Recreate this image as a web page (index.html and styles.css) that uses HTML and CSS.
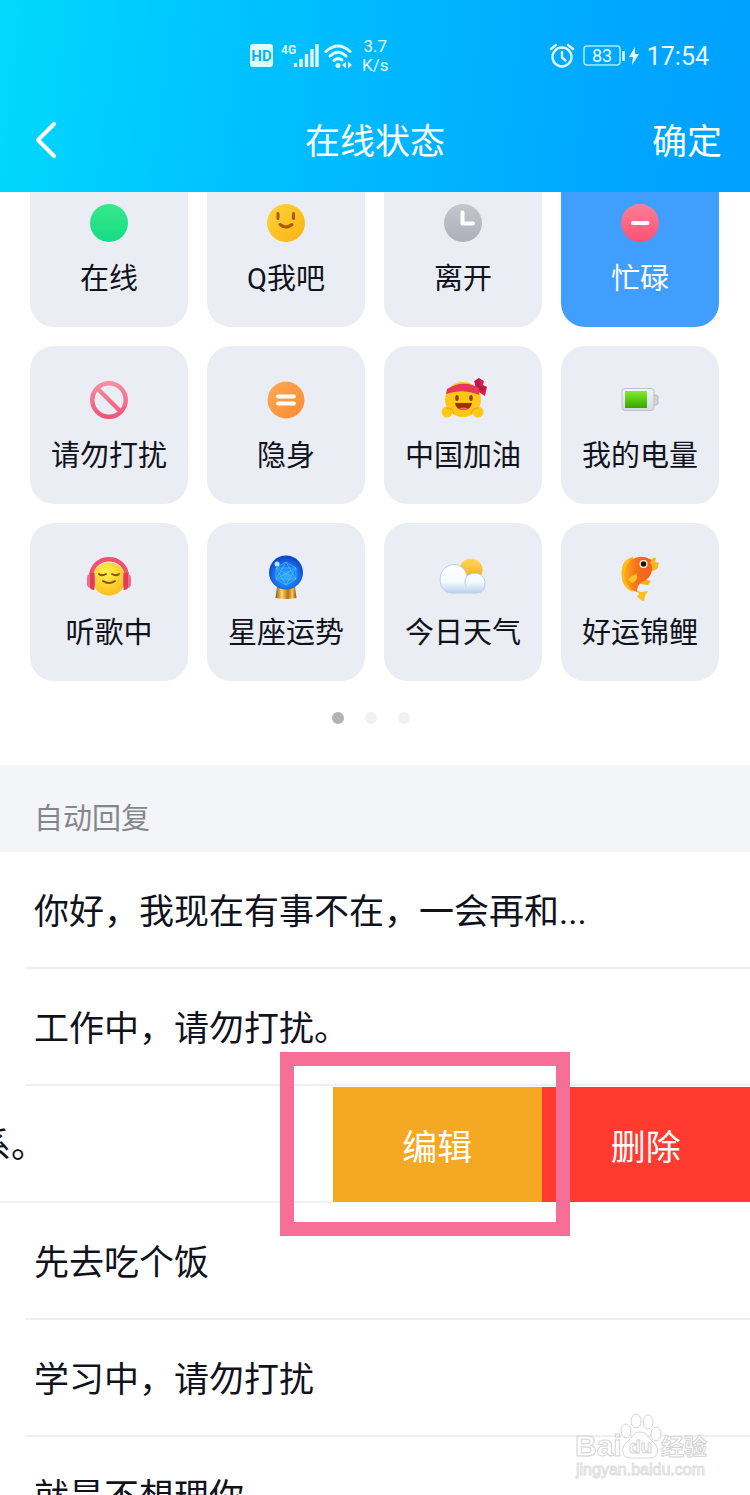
FILE: index.html
```html
<!DOCTYPE html>
<html lang="zh-CN">
<head>
  <meta charset="UTF-8">
  <title>在线状态</title>
  <meta name="viewport" content="width=device-width, initial-scale=1.0">
  <link rel="stylesheet" href="styles.css">
</head>
<body>
  <header class="header">
    <div class="statusbar">
      <div class="statusbar-left">
        <svg class="hd" width="24" height="24" viewBox="0 0 24 24">
          <rect x="0" y="0" width="23" height="23" rx="3" fill="#dffaff"/>
          <text x="11.5" y="17" text-anchor="middle" font-family="Roboto, sans-serif" font-weight="700" font-size="15" fill="#06b4f2">HD</text>
        </svg>
        <svg class="signal" width="38" height="26" viewBox="0 0 38 26">
          <text x="0" y="11" font-family="Roboto, sans-serif" font-weight="700" font-size="12" fill="#dffaff">4G</text>
          <path d="M14.500 24v-4M20 24v-8M25.500 24V11M31 24V6M36 24V1" stroke="#dffaff" stroke-width="3.400"/>
        </svg>
        <svg class="wifi" width="30" height="26" viewBox="0 0 30 26">
          <g fill="none" stroke="#dffaff" stroke-width="3" stroke-linecap="round">
            <path d="M2 8.500Q14 -2.500 26 8.500"/>
            <path d="M6 13Q14 5.500 22 13"/>
            <path d="M10 17.500Q14 14 18 17"/>
          </g>
          <circle cx="14" cy="22.500" r="2.500" fill="#dffaff"/>
          <path d="M22 18.500v7l-4-3.500zM24 18.500v7l4-3.500z" fill="#dffaff"/>
        </svg>
        <div class="speed">3.7<br>K/s</div>
      </div>
      <div class="statusbar-right">
        <svg width="26" height="26" viewBox="0 0 26 26" fill="none" stroke="#dffaff" stroke-width="2.400" stroke-linecap="round">
          <circle cx="13" cy="14" r="9.500"/>
          <path d="M13 9v5.500l3.500 3M2 6l5-4M24 6l-5-4"/>
        </svg>
        <svg width="42" height="24" viewBox="0 0 42 24">
          <rect x="1" y="2" width="36" height="19" rx="3" fill="none" stroke="#a6ebff" stroke-width="1.600"/>
          <path d="M40.500 7v10" stroke="#dffaff" stroke-width="2.600"/>
          <text x="19" y="18" text-anchor="middle" font-family="Roboto, sans-serif" font-size="18" fill="#e8fcff">83</text>
        </svg>
        <svg class="bolt" width="10" height="18" viewBox="0 0 10 18">
          <path d="M6 0L0 10h4l-1 8 7-11H6z" fill="#e8fcff"/>
        </svg>
        <span class="time">17:54</span>
      </div>
    </div>
    <nav class="nav">
      <button class="back" aria-label="返回">
        <svg width="22" height="38" viewBox="0 0 22 38" fill="none" stroke="#fff" stroke-width="4" stroke-linecap="round" stroke-linejoin="round">
          <path d="M19 3L3 19l16 16"/>
        </svg>
      </button>
      <h1>在线状态</h1>
      <button class="confirm">确定</button>
    </nav>
  </header>

  <main>
    <section class="status">
      <div class="status-grid">
        <button class="cell">
          <svg class="icon" viewBox="0 0 48 48">
            <defs><linearGradient id="green" x1="0" y1="0" x2="0" y2="1"><stop offset="0" stop-color="#37e88c"/><stop offset="1" stop-color="#16dc82"/></linearGradient></defs>
            <circle cx="24" cy="24" r="19" fill="url(#green)"/>
          </svg>
          <span>在线</span>
        </button>
        <button class="cell">
          <svg class="icon" viewBox="0 0 48 48">
            <defs><linearGradient id="yellow" x1="0" y1="0" x2="1" y2="1"><stop offset="0" stop-color="#fdd33c"/><stop offset="1" stop-color="#fbb210"/></linearGradient></defs>
            <circle cx="24" cy="24" r="19" fill="url(#yellow)"/>
            <path d="M16 14.500v5M31.500 14.500v5M18 25.500q6 5 12 0" fill="none" stroke="#a85a08" stroke-width="3" stroke-linecap="round"/>
          </svg>
          <span>Q我吧</span>
        </button>
        <button class="cell">
          <svg class="icon" viewBox="0 0 48 48">
            <defs><linearGradient id="grey" x1="0" y1="0" x2="0" y2="1"><stop offset="0" stop-color="#c6c6ce"/><stop offset="1" stop-color="#aeaeb8"/></linearGradient></defs>
            <circle cx="24" cy="24" r="19" fill="url(#grey)"/>
            <path d="M23.500 13.500v11H34" fill="none" stroke="#fff" stroke-width="4" stroke-linecap="round" stroke-linejoin="round"/>
          </svg>
          <span>离开</span>
        </button>
        <button class="cell active" aria-pressed="true">
          <svg class="icon" viewBox="0 0 48 48">
            <defs><linearGradient id="red" x1="0" y1="0" x2="0" y2="1"><stop offset="0" stop-color="#fb7f97"/><stop offset="1" stop-color="#fb5273"/></linearGradient></defs>
            <circle cx="24" cy="24" r="19" fill="url(#red)"/>
            <path d="M17 24h14.500" stroke="#fff" stroke-width="4" stroke-linecap="round"/>
          </svg>
          <span>忙碌</span>
        </button>

        <button class="cell">
          <svg class="icon" viewBox="0 0 48 48">
            <defs><linearGradient id="pink" gradientUnits="userSpaceOnUse" x1="0" y1="5" x2="0" y2="43"><stop offset="0" stop-color="#f592a6"/><stop offset="1" stop-color="#ee5476"/></linearGradient></defs>
            <g fill="none" stroke="url(#pink)" stroke-width="4.500">
              <circle cx="24" cy="24" r="16.700"/>
              <path d="M12.500 12.500l23 23"/>
            </g>
          </svg>
          <span>请勿打扰</span>
        </button>
        <button class="cell">
          <svg class="icon" viewBox="0 0 48 48">
            <defs><linearGradient id="orange" x1="0" y1="0" x2="1" y2="1"><stop offset="0" stop-color="#fcaa55"/><stop offset="1" stop-color="#fb8b30"/></linearGradient></defs>
            <circle cx="24" cy="24" r="18.500" fill="url(#orange)"/>
            <path d="M16 20.500h16M16 27.500h16" stroke="#fff" stroke-width="3.800" stroke-linecap="round"/>
          </svg>
          <span>隐身</span>
        </button>
        <button class="cell">
          <svg class="icon" viewBox="0 0 48 48">
            <path d="M36 10l4-8 5 3-1 4 4 2-2 9-8-5z" fill="#d82148"/>
            <path d="M37 11l-2-6 5-3 1 8 6 1-3 5z" fill="#b81a4a"/>
            <ellipse cx="24" cy="23.500" rx="18" ry="17.500" fill="#ffc815"/>
            <path d="M8 13Q24 3 40 12V19Q24 12 7 18z" fill="#e8375a"/>
            <circle cx="8" cy="36" r="5.500" fill="#ffc71c"/>
            <circle cx="39" cy="36" r="5.500" fill="#ffc71c"/>
            <path d="M8 32q6 0 7 6M39 32q-6 0-7 6" fill="none" stroke="#f3a90c" stroke-width="1.300"/>
            <ellipse cx="18" cy="22" rx="1.800" ry="3" fill="#934006"/>
            <ellipse cx="32" cy="22" rx="1.800" ry="3" fill="#934006"/>
            <path d="M16 27h17q-1 7-8.500 7T16 27z" fill="#a52810"/>
            <path d="M20 32.500q4.500-2 9 0-4.500 3-9 0z" fill="#f0635a"/>
          </svg>
          <span>中国加油</span>
        </button>
        <button class="cell">
          <svg class="icon" viewBox="0 0 48 48">
            <defs>
              <linearGradient id="case" x1="0" y1="0" x2="0" y2="1"><stop offset="0" stop-color="#f3f5f8"/><stop offset="1" stop-color="#d6d9de"/></linearGradient>
              <linearGradient id="charge" x1="0" y1="0" x2="0" y2="1"><stop offset="0" stop-color="#85e735"/><stop offset=".5" stop-color="#5acb12"/><stop offset="1" stop-color="#37a306"/></linearGradient>
            </defs>
            <rect x="37" y="19" width="5" height="10" rx="2" fill="#d2d4da" stroke="#b9bcc3"/>
            <rect x="6" y="12.500" width="32" height="22" rx="3" fill="url(#case)" stroke="#bcbfc6"/>
            <rect x="9" y="15" width="22" height="17" fill="url(#charge)"/>
          </svg>
          <span>我的电量</span>
        </button>

        <button class="cell">
          <svg class="icon" viewBox="0 0 48 48">
            <defs><radialGradient id="face" cx=".4" cy=".3" r=".8"><stop offset="0" stop-color="#fff04e"/><stop offset="1" stop-color="#fcb813"/></radialGradient></defs>
            <path d="M6 25C6 0 42 0 42 25" fill="none" stroke="#ef5370" stroke-width="4.500"/>
            <circle cx="24" cy="26" r="16.500" fill="url(#face)"/>
            <rect x="2" y="21" width="8" height="14" rx="4" fill="#f16e88"/>
            <rect x="38" y="21" width="8" height="14" rx="4" fill="#f16e88"/>
            <path d="M5 20h4.500v17Q5 37 5 34zM43 20h-4.500v17q4.500 0 4.500-3z" fill="#e23c5c"/>
            <path d="M14 21q3 2.500 7 0M27 21q4 2.500 7 0M18 28q6 4 12 0" fill="none" stroke="#8b5206" stroke-width="2" stroke-linecap="round"/>
          </svg>
          <span>听歌中</span>
        </button>
        <button class="cell">
          <svg class="icon" viewBox="0 0 48 48">
            <defs>
              <radialGradient id="ball" cx=".5" cy=".6" r=".55"><stop offset="0" stop-color="#2db6fa"/><stop offset=".6" stop-color="#1878ef"/><stop offset="1" stop-color="#0d47cd"/></radialGradient>
              <linearGradient id="gold"><stop offset="0" stop-color="#92540c"/><stop offset=".3" stop-color="#ffd86c"/><stop offset=".6" stop-color="#b96c10"/><stop offset=".8" stop-color="#f9c853"/><stop offset="1" stop-color="#8a4b08"/></linearGradient>
            </defs>
            <path d="M15 34h18l1.500 11q-10.500 2-21 0z" fill="url(#gold)"/>
            <circle cx="24" cy="19.500" r="17" fill="url(#ball)"/>
            <path d="M24 9l10 6v11l-10 6-10-6V15zM14 15l20 11M34 15L14 26M24 9l10 17H14zM24 32L14 15h20z" fill="none" stroke="#5dc7fb" stroke-width=".8" opacity=".7"/>
            <circle cx="15" cy="11" r="2.500" fill="#b9e5ff"/>
          </svg>
          <span>星座运势</span>
        </button>
        <button class="cell">
          <svg class="icon" viewBox="0 0 48 48">
            <defs>
              <linearGradient id="cloud" x1="0" y1="0" x2="0" y2="1"><stop offset="0" stop-color="#fff"/><stop offset=".6" stop-color="#f5faff"/><stop offset="1" stop-color="#b9d1ec"/></linearGradient>
              <linearGradient id="sun" x1="0" y1="0" x2="0" y2="1"><stop offset="0" stop-color="#ffd957"/><stop offset="1" stop-color="#f9a51c"/></linearGradient>
            </defs>
            <circle cx="32" cy="17" r="11.500" fill="url(#sun)"/>
            <path d="M13 40C-2 39-1 20 6 15c8-7 20-3 22 8 9-6 18-1 18 7s-4 10-10 10z" fill="url(#cloud)" stroke="#b7cfe9"/>
            <path d="M28 23q-3 4-1 11" fill="none" stroke="#c9dcf0" stroke-width="1.500"/>
          </svg>
          <span>今日天气</span>
        </button>
        <button class="cell">
          <svg class="icon" viewBox="0 0 48 48">
            <defs><linearGradient id="carp"><stop offset="0" stop-color="#fbaa18"/><stop offset=".35" stop-color="#f5731b"/><stop offset="1" stop-color="#f15a1e"/></linearGradient></defs>
            <path d="M17 4Q5 6 5.500 22q0 12 11 17z" fill="#fdbb17"/>
            <path d="M27 26l8 2-3 4-8-1z" fill="#fcae19"/>
            <path d="M36 7Q22-1 12 10 4 23 13 34q3 4 8 5 0-7 5-10 8-3 10-11l6-4z" fill="url(#carp)"/>
            <path d="M34 10q2-6 6-5l-1 4 4 1-2 6-6 3q3-5-1-9z" fill="#fbb61d"/>
            <path d="M20 37l3 4-2 3 7 5 1-6 3-5-7 1z" fill="#fbc01a"/>
            <path d="M12 27q3-5 9-6 1 8-5 9z" fill="#ffc21f"/>
            <circle cx="27.500" cy="11" r="4" fill="#fff"/>
            <circle cx="27.500" cy="11" r="2.800" fill="#23140c"/>
          </svg>
          <span>好运锦鲤</span>
        </button>
      </div>
      <div class="dots">
        <i class="dot current"></i>
        <i class="dot"></i>
        <i class="dot"></i>
      </div>
    </section>

    <h2 class="section-title">自动回复</h2>

    <ul class="replies">
      <li><p>你好，我现在有事不在，一会再和...</p></li>
      <li><p>工作中，请勿打扰。</p></li>
      <li class="swiped">
        <p>我去吃饭了，一会再联系。</p>
        <div class="actions">
          <button class="edit">编辑</button>
          <button class="delete">删除</button>
          <span class="marker"></span>
        </div>
      </li>
      <li><p>先去吃个饭</p></li>
      <li><p>学习中，请勿打扰</p></li>
      <li><p>就是不想理你</p></li>
    </ul>
  </main>

  <svg class="watermark" width="140" height="70" viewBox="0 0 140 70" fill="#fff" stroke="#d4d4d4" stroke-width="1">
    <g font-family="'Liberation Sans', 'Noto Sans CJK SC', sans-serif" font-weight="700">
      <text x="5" y="44" font-size="30">Bai</text>
      <ellipse cx="56" cy="19" rx="5" ry="7"/>
      <ellipse cx="66" cy="9" rx="5" ry="7"/>
      <ellipse cx="78" cy="10" rx="5" ry="7"/>
      <ellipse cx="86" cy="22" rx="5" ry="7"/>
      <path d="M70 20c7 0 8 6 13 10 8 7 5 16-3 16-5 0-15 0-19 0-9 0-11-10-4-16 5-4 6-10 13-10z"/>
      <text x="59" y="41" font-size="19">du</text>
      <text x="91" y="43" font-size="23">经验</text>
    </g>
    <text class="watermark-url" x="6" y="63" font-family="'Liberation Sans', sans-serif" font-size="16">jingyan.baidu.com</text>
  </svg>
</body>
</html>
```
FILE: styles.css
```css
:root {
  --text: #10121c;
  --cell: #ebedf4;
  --line: #f0f0f2;
}

* {
  box-sizing: border-box;
}

body {
  position: relative;
  margin: 0;
  height: 100vh;
  overflow: hidden;
  background: #fff;
  color: var(--text);
  font-family: Roboto, "Noto Sans CJK SC", sans-serif;
}

button {
  border: none;
  padding: 0;
  background: none;
  color: inherit;
  font-family: inherit;
  cursor: pointer;
}

svg {
  display: block;
  flex: none;
}

/* header */
.header {
  position: relative;
  z-index: 1;
  padding-bottom: 24px;
  background: linear-gradient(97deg, #00d9fc, #00c3ff 30%, #00a5ff 85%, #00a1ff);
  color: #fff;
}

.statusbar {
  display: flex;
  align-items: center;
  justify-content: space-between;
  height: 112px;
  padding: 0 41px 0 250px;
  color: #e8fcff;
}

.statusbar-left,
.statusbar-right {
  display: flex;
  align-items: center;
}

.signal {
  margin-left: 7px;
}

.wifi {
  margin-left: 5px;
}

.speed {
  margin-left: 8px;
  font-size: 17px;
  line-height: 19px;
  text-align: center;
}

.statusbar-right {
  gap: 8px;
}

.bolt {
  margin-left: -4px;
}

.time {
  font-size: 25px;
}

.nav {
  display: grid;
  grid-template-columns: 1fr auto 1fr;
  align-items: center;
  height: 56px;
  padding: 0 28px;
}

.back {
  justify-self: start;
  padding-left: 7px;
}

.nav h1,
.confirm {
  margin: 0;
  padding-top: 6px;
  font-size: 35px;
  font-weight: 400;
  line-height: 50px;
}

.confirm {
  justify-self: end;
}

/* status grid, scrolled a little under the header */
.status {
  margin-top: -23px;
  padding: 0 31px 0 30px;
}

.status-grid {
  display: grid;
  grid-template-columns: repeat(4, 1fr);
  gap: 19px;
}

.cell {
  display: flex;
  flex-direction: column;
  align-items: center;
  gap: 12px;
  aspect-ratio: 1;
  padding-top: 30px;
  border-radius: 24px;
  background: var(--cell);
  font-size: 29px;
  line-height: 40px;
  white-space: nowrap;
}

.cell.active {
  background: #409eff;
  color: #fff;
}

.icon {
  width: 48px;
  height: 48px;
}

.dots {
  display: flex;
  justify-content: center;
  gap: 21px;
  padding: 31px 8px 41px 0;
}

.dot {
  width: 12px;
  height: 12px;
  border-radius: 50%;
  background: #f1f1f1;
}

.dot.current {
  background: #b4b4b4;
}

/* auto replies */
.section-title {
  margin: 0;
  padding: 34px 34px 12px;
  background: #f4f5f8;
  color: #85868c;
  font-size: 29px;
  font-weight: 400;
  line-height: 41px;
}

.replies {
  margin: 0;
  padding: 0;
  list-style: none;
}

.replies li {
  display: flex;
  padding-left: 25px;
}

.replies p {
  flex: 1;
  margin: 0;
  padding: 35px 9px 29px;
  border-bottom: 2px solid var(--line);
  font-size: 35px;
  line-height: 51px;
  white-space: nowrap;
}

.replies .swiped {
  --actions: 417px;
  width: calc(100% + var(--actions));
  margin-left: calc(-1 * var(--actions));
}

.replies .swiped p {
  padding-left: 18px;
}

.actions {
  position: relative;
  display: flex;
  width: var(--actions);
  margin: 1px 0;
}

.actions button {
  flex: 1;
  color: #fff;
  font-size: 35px;
}

.edit {
  background: #f5a823;
}

.delete {
  background: #ff3b30;
}

.marker {
  position: absolute;
  z-index: 1;
  top: -35px;
  bottom: -34px;
  left: -53px;
  width: 290px;
  border: 14px solid #f76e96;
  pointer-events: none;
}

.watermark {
  position: absolute;
  right: 40px;
  bottom: 13px;
}

.watermark-url {
  stroke: #dedede;
}
```
